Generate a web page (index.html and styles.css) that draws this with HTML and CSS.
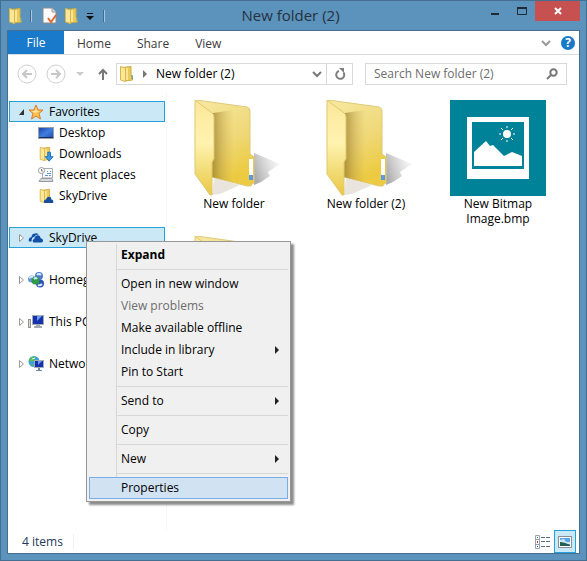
FILE: index.html
```html
<!DOCTYPE html>
<html lang="en">
<head>
  <meta charset="utf-8">
  <meta name="viewport" content="width=device-width">
  <title>New folder (2)</title>
  <link rel="stylesheet" href="styles.css">
</head>
<body>
  <!-- shared icons -->
  <svg class="defs" width="0" height="0" aria-hidden="true">
    <defs>
      <linearGradient id="gFront" x1="0" y1="0" x2="0" y2="1">
        <stop offset="0" stop-color="#fbe79a"/>
        <stop offset="0.45" stop-color="#fff3b0"/>
        <stop offset="1" stop-color="#e8c845"/>
      </linearGradient>
      <linearGradient id="gBack" x1="0" y1="0" x2="0.4" y2="1">
        <stop offset="0" stop-color="#f7e9a2"/>
        <stop offset="0.6" stop-color="#efd878"/>
        <stop offset="1" stop-color="#eccb42"/>
      </linearGradient>
      <linearGradient id="gShade" x1="0" y1="0" x2="1" y2="0">
        <stop offset="0" stop-color="#8f7424" stop-opacity="0.7"/>
        <stop offset="0.4" stop-color="#a88a35" stop-opacity="0.4"/>
        <stop offset="1" stop-color="#c9aa4a" stop-opacity="0"/>
      </linearGradient>
      <linearGradient id="gCast" x1="0" y1="0.6" x2="1" y2="0.2">
        <stop offset="0" stop-color="#777" stop-opacity="0.6"/>
        <stop offset="1" stop-color="#aaa" stop-opacity="0.05"/>
      </linearGradient>
      <linearGradient id="gScreen" x1="0" y1="0" x2="1" y2="1">
        <stop offset="0" stop-color="#1b3fa0"/>
        <stop offset="0.5" stop-color="#3f7fe0"/>
        <stop offset="1" stop-color="#1d48b4"/>
      </linearGradient>
      <symbol id="folder" viewBox="0 0 96 96">
        <path d="M68 53 Q80 58 94 64 L82 72 L84 76 L75 82 L68 85 Z" fill="url(#gCast)"/>
        <path d="M28 78 L54 85 L34 94 L26 95 Z" fill="#b5a68f" opacity="0.3"/>
        <path d="M10 0 L61 7 Q64 8 64 11 L64 54 L68 57 L68 83 L66 84 L65 86 L61 86 L26 77 Z" fill="url(#gBack)" stroke="#dfc878"/>
        <path d="M27 13 L48 10 L46 82 L26 77 Z" fill="url(#gShade)"/>
        <rect x="63" y="59" width="4" height="21" fill="#fff"/>
        <rect x="63" y="75" width="4" height="5" fill="#5a9be8"/>
        <path d="M9 0 L26 13 Q28 14 28 17 L28 59 L26 62 L26 95 L24 95 L9 74 Z" fill="url(#gFront)" stroke="#e0c86c"/>
      </symbol>
      <symbol id="folder-small" viewBox="0 0 16 18">
        <path d="M4 2.500 L12 1.500 V10 L13.500 11 V15 L5 16 Z" fill="#ecca58" stroke="#cfaa40"/>
        <path d="M1.500 1.500 L6.500 3 V16.500 L1.500 15 Z" fill="#fbe795" stroke="#d8b64c"/>
        <path d="M8 3 V15" stroke="#f8e596" stroke-width="2"/>
        <path d="M13 10 V14" stroke="#2f9bd8"/>
      </symbol>
      <symbol id="cloud" viewBox="0 0 18 14">
        <path d="M1 11 Q0 7 4 6 Q4 2 8 2 Q10 1 12 3 Q8 3 7 6 Q4 6 4 11 Z" fill="#1350a8"/>
        <path d="M6 12 Q4 9 7 8 Q8 4 11 4 Q14 4 14 7 Q17 8 17 10 Q17 12 15 12 Z" fill="#1350a8"/>
      </symbol>
      <symbol id="expander" viewBox="0 0 8 10">
        <path d="M.5 1.500 L4.500 5 L.5 8.500 Z" fill="#fff" stroke="#9a9a9a"/>
      </symbol>
      <symbol id="chevron" viewBox="0 0 10 8">
        <path d="M1 2 L5 6 L9 2" fill="none" stroke="currentColor" stroke-width="2"/>
      </symbol>
      <symbol id="submenu" viewBox="0 0 5 8">
        <path d="M1 0 L5 4 L1 8 Z" fill="#222"/>
      </symbol>
    </defs>
  </svg>

  <div class="window">
    <header class="titlebar">
      <div class="quick">
        <svg class="icon" width="16" height="18"><use href="#folder-small"/></svg>
        <span class="divider"></span>
        <button class="bare" aria-label="Properties">
          <svg width="16" height="18" viewBox="0 0 16 18">
            <path d="M1 1 H10 L14 5 V16 H1 Z" fill="#fbfbfb" stroke="#8b8b8b"/>
            <path d="M10 1 V5 H14" fill="#ddd" stroke="#999"/>
            <path d="M6 11 L9 15 L14 8" fill="none" stroke="#e06a35" stroke-width="2"/>
          </svg>
        </button>
        <button class="bare" aria-label="New folder">
          <svg width="16" height="18"><use href="#folder-small"/></svg>
        </button>
        <button class="bare customize" aria-label="Customize toolbar">
          <svg width="8" height="8" viewBox="0 0 8 8"><path d="M1 1.500 H7" stroke="#111"/><path d="M0 4 H8 L4 8 Z" fill="#111"/></svg>
        </button>
        <span class="divider"></span>
      </div>
      <h1>New folder (2)</h1>
      <div class="controls">
        <button class="bare" aria-label="Minimize">
          <svg width="10" height="10" viewBox="0 0 10 10"><path d="M1 8 H9" stroke="#1f2a33" stroke-width="2"/></svg>
        </button>
        <button class="bare" aria-label="Maximize">
          <svg width="10" height="8" viewBox="0 0 10 8"><path d="M0 1 H10" stroke="#1f2a33" stroke-width="2"/><path d="M.5 1 V7.500 H9.500 V1" fill="none" stroke="#1f2a33"/></svg>
        </button>
        <button class="close" aria-label="Close">
          <svg width="8" height="8" viewBox="0 0 8 8"><path d="M1 1 L7 7 M7 1 L1 7" stroke="#fff" stroke-width="2"/></svg>
        </button>
      </div>
    </header>

    <div class="client">
      <nav class="ribbon">
        <button class="tab file">File</button>
        <button class="tab">Home</button>
        <button class="tab">Share</button>
        <button class="tab">View</button>
        <div class="ribbon-end">
          <button class="bare" aria-label="Expand the ribbon"><svg width="10" height="8"><use href="#chevron"/></svg></button>
          <button class="help" aria-label="Help">?</button>
        </div>
      </nav>

      <div class="navbar">
        <button class="bare" aria-label="Back">
          <svg width="20" height="20" viewBox="0 0 20 20"><circle cx="10" cy="10" r="9" fill="none" stroke="#d0d0d0"/><path d="M15 10 H6 M10 6 L6 10 L10 14" fill="none" stroke="#c6c6c6" stroke-width="2"/></svg>
        </button>
        <button class="bare forward" aria-label="Forward">
          <svg width="20" height="20" viewBox="0 0 20 20"><circle cx="10" cy="10" r="9" fill="none" stroke="#d0d0d0"/><path d="M5 10 H14 M10 6 L14 10 L10 14" fill="none" stroke="#c6c6c6" stroke-width="2"/></svg>
        </button>
        <button class="bare recent" aria-label="Recent locations">
          <svg width="8" height="4" viewBox="0 0 8 4"><path d="M0 0 H8 L4 4 Z" fill="#ccc"/></svg>
        </button>
        <button class="bare up" aria-label="Up">
          <svg width="10" height="12" viewBox="0 0 10 12"><path d="M5 12 V2 M1 6 L5 2 L9 6" fill="none" stroke="#777" stroke-width="2"/></svg>
        </button>
        <div class="address">
          <svg class="icon" width="16" height="18"><use href="#folder-small"/></svg>
          <svg class="crumb" width="4" height="8" viewBox="0 0 4 8"><path d="M0 0 L4 4 L0 8 Z" fill="#777"/></svg>
          <span class="path">New folder (2)</span>
          <button class="bare drop" aria-label="Previous locations"><svg width="10" height="8"><use href="#chevron"/></svg></button>
          <button class="bare refresh" aria-label="Refresh">
            <svg width="12" height="12" viewBox="0 0 12 12"><path d="M9.500 4.500 A4 4 0 1 1 5 3" fill="none" stroke="#808080" stroke-width="2"/><path d="M5 0 H10 V5 Z" fill="#808080"/></svg>
          </button>
        </div>
        <label class="search">
          <input type="text" placeholder="Search New folder (2)" aria-label="Search New folder (2)">
          <svg width="12" height="12" viewBox="0 0 12 12"><circle cx="7.500" cy="4.500" r="3.200" fill="none" stroke="#777" stroke-width="2"/><path d="M5 7 L1 11" stroke="#777" stroke-width="2"/></svg>
        </label>
      </div>

      <div class="body">
        <aside class="tree">
          <div class="group">
            <a class="node selected" href="#">
              <svg width="8" height="10" viewBox="0 0 8 10"><path d="M5 2 V8 H0 Z" fill="#333"/></svg>
              <svg width="16" height="16" viewBox="0 0 16 16"><path d="M8 1 L10 6 L15 6 L11 9.500 L12.500 15 L8 12 L3.500 15 L5 9.500 L1 6 L6 6 Z" fill="#fbc253" stroke="#dc7b23"/><path d="M8 3 L9 7 L12 7 L7 9 L3 7 L7 7 Z" fill="#fee3a0"/></svg>
              Favorites
            </a>
            <a class="node child" href="#">
              <svg width="16" height="16" viewBox="0 0 16 16"><rect x=".5" y="2.500" width="15" height="11" fill="url(#gScreen)" stroke="#9aa3ad"/><path d="M1 12.500 H15" stroke="#1a2c50"/></svg>
              Desktop
            </a>
            <a class="node child" href="#">
              <svg width="16" height="16" viewBox="0 0 16 18"><use href="#folder-small" width="16" height="18"/><path d="M10 7 H13 V12 H16 L11.500 17 L7 12 H10 Z" fill="#3d9be8" stroke="#1869b5"/></svg>
              Downloads
            </a>
            <a class="node child" href="#">
              <svg width="16" height="16" viewBox="0 0 16 16"><path d="M4.500 1.500 H14.500 V11 H4.500 Z" fill="#f7f8fa" stroke="#a8adb3"/><path d="M3 11.500 H14 L15 14.500 H1 Z" fill="#d5d8dc" stroke="#969ba1"/><circle cx="3.500" cy="3.500" r="3" fill="#fff" stroke="#999"/><path d="M3.500 2 V4 H5" fill="none" stroke="#777"/><path d="M9 4.500 H10 M12 4.500 H13 M7 8.500 H10 M11 8.500 H13 M9 6.500 H13" stroke="#5d97d0"/></svg>
              Recent places
            </a>
            <a class="node child" href="#">
              <svg width="16" height="16" viewBox="0 0 16 18"><use href="#folder-small" width="16" height="18"/><path d="M6 17 Q5 13 8 13 Q9 9 12 10 Q14 10 14 13 Q17 13 16 17 Z" fill="#174f9c"/></svg>
              SkyDrive
            </a>
          </div>
          <div class="group">
            <a class="node selected" href="#">
              <svg width="8" height="10"><use href="#expander"/></svg>
              <svg width="16" height="14" viewBox="0 0 18 14"><use href="#cloud" width="18" height="14"/></svg>
              SkyDrive
            </a>
          </div>
          <div class="group">
            <a class="node" href="#">
              <svg width="8" height="10"><use href="#expander"/></svg>
              <svg width="16" height="16" viewBox="0 0 16 16"><circle cx="3.500" cy="7" r="3.500" fill="#6a95d8"/><circle cx="11" cy="4" r="4" fill="#4d7bcc"/><circle cx="12" cy="11.500" r="4" fill="#2d56b4"/><circle cx="7.500" cy="8.500" r="4" fill="#2d9a48"/><path d="M1 6 Q3 4 5 5 M9 3 Q11 1 13 3 M6 7 Q8 5 9 7 M10 13 Q12 14 14 12" fill="none" stroke="#d8ebff" stroke-width="2"/></svg>
              Homegroup
            </a>
          </div>
          <div class="group">
            <a class="node" href="#">
              <svg width="8" height="10"><use href="#expander"/></svg>
              <svg width="16" height="16" viewBox="0 0 16 16"><rect x=".5" y="5.500" width="2" height="8" fill="#d9dcd9" stroke="#8e9490"/><rect x="4.500" y="1.500" width="11" height="9" fill="#1531b0" stroke="#a5abb2"/><path d="M9 2 H14 L9 7 Z" fill="#6a9cf0"/><path d="M8 11 H12 V12 H14 V14 H6 V12 H8 Z" fill="#a3a9b0"/></svg>
              This PC
            </a>
          </div>
          <div class="group">
            <a class="node" href="#">
              <svg width="8" height="10"><use href="#expander"/></svg>
              <svg width="16" height="16" viewBox="0 0 16 16"><circle cx="6" cy="5.500" r="5.500" fill="#3c9fe0"/><path d="M1 4 Q4 -1 8 1 L6 5 L3 6 Z M2 8 L5 8 L6 11 Z" fill="#5abf50"/><path d="M4 3 L7 2" stroke="#e0f5ff"/><rect x="6.500" y="4.500" width="9" height="7" fill="#1531b0" stroke="#a5abb2"/><path d="M10 5 H14 L10 9 Z" fill="#6a9cf0"/><path d="M10 12 H12 V14 H14 V15 H8 V14 H10 Z" fill="#6d86a8"/></svg>
              Network
            </a>
          </div>
        </aside>

        <main class="files">
          <div class="item">
            <svg width="96" height="96"><use href="#folder"/></svg>
            <span>New folder</span>
          </div>
          <div class="item">
            <svg width="96" height="96"><use href="#folder"/></svg>
            <span>New folder (2)</span>
          </div>
          <div class="item">
            <svg width="96" height="96" viewBox="0 0 96 96">
              <rect width="96" height="96" fill="#008299"/>
              <path d="M17 17 H79 V79 H17 Z M22 22 V69 H74 V22 Z" fill="#fff" fill-rule="evenodd"/>
              <path d="M24 66 V52 L36 41 L40 46 L43 45 L54 56 L62 52 L72 56 V66 Z" fill="#fff"/>
              <circle cx="57" cy="34" r="4" fill="#fff"/>
              <path d="M57 26 V28 M57 40 V42 M49 34 H51 M63 34 H65 M51 28 L53 30 M61 38 L63 40 M63 28 L61 30 M53 38 L51 40" stroke="#fff"/>
            </svg>
            <span>New Bitmap Image.bmp</span>
          </div>
          <div class="item">
            <svg width="96" height="96"><use href="#folder"/></svg>
          </div>
        </main>
      </div>

      <footer class="status">
        <span class="count">4 items</span>
        <button class="view" aria-label="Details">
          <svg width="16" height="14" viewBox="0 0 16 14"><path d="M.5 .5 H4.500 V13.500 H.5 Z M.5 4.500 H4.500 M.5 9.500 H4.500" fill="#fff" stroke="#98a2ad"/><path d="M2 2.500 H3" stroke="#2a8a6a"/><path d="M2 7 H3" stroke="#d02a2a" stroke-width="2"/><path d="M2 11.500 H3" stroke="#2a4ad0"/><path d="M6 2.500 H10 M11 2.500 H15 M6 6.500 H10 M11 6.500 H15 M6 11.500 H10 M11 11.500 H15" stroke="#5a6a80"/></svg>
        </button>
        <button class="view active" aria-label="Large icons">
          <svg width="14" height="12" viewBox="0 0 14 12"><rect x=".5" y=".5" width="13" height="11" fill="#fff" stroke="#8a8f96"/><rect x="2" y="2" width="10" height="8" fill="#5aa5e8"/><path d="M2 4 L6 3 L8 6 H12 V8 H2 Z" fill="#cfe8f8"/><path d="M2 6 Q6 6 12 9 V10 H2 Z" fill="#245e50"/></svg>
        </button>
      </footer>
    </div>

    <div class="menu" role="menu">
      <button role="menuitem" class="default">Expand</button>
      <hr>
      <button role="menuitem">Open in new window</button>
      <button role="menuitem" disabled>View problems</button>
      <button role="menuitem">Make available offline</button>
      <button role="menuitem">Include in library <svg width="5" height="8"><use href="#submenu"/></svg></button>
      <button role="menuitem">Pin to Start</button>
      <hr>
      <button role="menuitem">Send to <svg width="5" height="8"><use href="#submenu"/></svg></button>
      <hr>
      <button role="menuitem">Copy</button>
      <hr>
      <button role="menuitem">New <svg width="5" height="8"><use href="#submenu"/></svg></button>
      <hr>
      <button role="menuitem" class="hover">Properties</button>
    </div>
  </div>
</body>
</html>
```

FILE: styles.css
```css
* {
  box-sizing: border-box;
}

body {
  margin: 0;
  font-family: "Open Sans", "Noto Sans", sans-serif;
  font-size: 12px;
  line-height: 15px;
  color: #000;
}

button,
input {
  font: inherit;
  color: inherit;
  margin: 0;
  padding: 0;
  border: none;
  background: none;
}

svg {
  display: block;
  flex: none;
}

.defs {
  position: absolute;
}

.bare {
  display: flex;
  align-items: center;
  justify-content: center;
}

.window {
  position: relative;
  display: flex;
  flex-direction: column;
  min-height: 100vh;
  padding: 0 6px 6px;
  border: 1px solid #456f92;
  background-color: #5b93bc;
}

/* title bar */
.titlebar {
  display: grid;
  grid-template-columns: 1fr auto 1fr;
  height: 29px;
}
.titlebar h1 {
  margin: 0;
  padding-right: 6px;
  font-size: 15px;
  font-weight: 400;
  line-height: 29px;
  color: #26323c;
}
.quick {
  display: flex;
  align-items: center;
  padding-left: 1px;
}
.quick .divider {
  width: 2px;
  height: 12px;
  border-left: 1px solid #3f6c90;
  border-right: 1px solid #a9c6dc;
  margin: 0 10px 0 6px;
}
.quick .bare + .bare {
  margin-left: 6px;
}
.quick .customize {
  margin-right: 3px;
}
.controls {
  display: flex;
  justify-content: flex-end;
  align-items: flex-start;
}
.controls .bare {
  width: 27px;
  height: 20px;
}
.controls .close {
  display: flex;
  align-items: center;
  justify-content: center;
  width: 45px;
  height: 20px;
  background-color: #c75050;
}

.client {
  display: flex;
  flex-direction: column;
  flex: 1;
  border: 1px solid #456f92;
  background-color: #fff;
}

/* ribbon */
.ribbon {
  display: flex;
  height: 24px;
  border-bottom: 1px solid #dadbdc;
}
.tab {
  padding: 2px 13px 0;
  color: #3b3b3b;
}
.tab.file {
  width: 56px;
  padding: 0;
  background-color: #1979ca;
  color: #fff;
}
.ribbon-end {
  display: flex;
  align-items: center;
  margin-left: auto;
  padding-right: 4px;
  gap: 10px;
  color: #999;
}
.help {
  width: 14px;
  height: 14px;
  border-radius: 50%;
  background-color: #1979ca;
  color: #fff;
  font-weight: 700;
  line-height: 14px;
}

/* address bar */
.navbar {
  display: flex;
  align-items: center;
  height: 37px;
  padding: 0 12px 0 9px;
}
.forward {
  margin-left: 9px;
}
.recent {
  margin-left: 10px;
}
.up {
  margin: 0 8px 0 14px;
}
.address {
  display: flex;
  align-items: center;
  flex: 1;
  height: 22px;
  border: 1px solid #d9d9d9;
  padding-left: 2px;
}
.crumb {
  margin: 0 9px 0 8px;
}
.drop {
  width: 18px;
  margin-left: auto;
  color: #777;
}
.refresh {
  width: 26px;
  height: 20px;
  border-left: 1px solid #d9d9d9;
}
.search {
  display: flex;
  align-items: center;
  flex: 0 1 202px;
  height: 22px;
  margin-left: 12px;
  padding: 0 8px;
  border: 1px solid #d9d9d9;
}
.search input {
  flex: 1;
  min-width: 0;
}
.search input::placeholder {
  color: #6d6d6d;
  opacity: 1;
}

/* folder tree */
.body {
  display: flex;
  flex: 1;
}
.tree {
  width: 159px;
  padding: 9px 1px 0;
  border-right: 1px solid #f7f7f7;
}
.group {
  margin-bottom: 21px;
}
.node {
  display: flex;
  align-items: center;
  height: 21px;
  padding-left: 9px;
  border: 1px solid transparent;
  color: #000;
  text-decoration: none;
  white-space: nowrap;
}
.node svg + svg {
  margin: 0 5px 0 1px;
}
.node.child {
  padding-left: 28px;
  gap: 5px;
}
.node.selected {
  border-color: #26a0da;
  background-color: #cbe8f6;
}

/* files */
.files {
  display: grid;
  grid-template-columns: repeat(auto-fill, 132px);
  grid-auto-rows: 136px;
  align-content: start;
  flex: 1;
  padding: 8px 0 0 1px;
}
.item {
  display: flex;
  flex-direction: column;
  align-items: center;
  text-align: center;
}
.item span {
  width: 82px;
}

/* status bar */
.status {
  display: flex;
  align-items: center;
  height: 23px;
  padding: 0 3px 0 14px;
  color: #1e395b;
}
.count {
  margin-right: auto;
  padding-right: 10px;
  border-right: 1px solid #f0f0f0;
}
.view {
  display: flex;
  align-items: center;
  justify-content: center;
  width: 22px;
  height: 23px;
}
.view.active {
  border: 1px solid #26a0da;
  background-color: #cbe8f6;
}

/* context menu */
.menu {
  position: absolute;
  left: 85px;
  top: 240px;
  width: 205px;
  padding: 2px;
  border: 1px solid #979797;
  background: linear-gradient(#d7d7d7, #d7d7d7) 29px 2px / 1px calc(100% - 4px) no-repeat #f0f0f0;
  box-shadow: 3px 3px 2px rgba(0, 0, 0, 0.45);
}
.menu button {
  display: flex;
  align-items: center;
  justify-content: space-between;
  width: 100%;
  height: 22px;
  padding: 0 8px 1px 31px;
  border: 1px solid transparent;
}
.menu button:disabled {
  color: #6d6d6d;
}
.menu .default {
  font-weight: 700;
}
.menu .hover {
  border-color: #78aee5;
  background-color: #d1e2f2;
}
.menu hr {
  height: 1px;
  margin: 3px 0 3px 28px;
  border: none;
  background-color: #d7d7d7;
}
```
